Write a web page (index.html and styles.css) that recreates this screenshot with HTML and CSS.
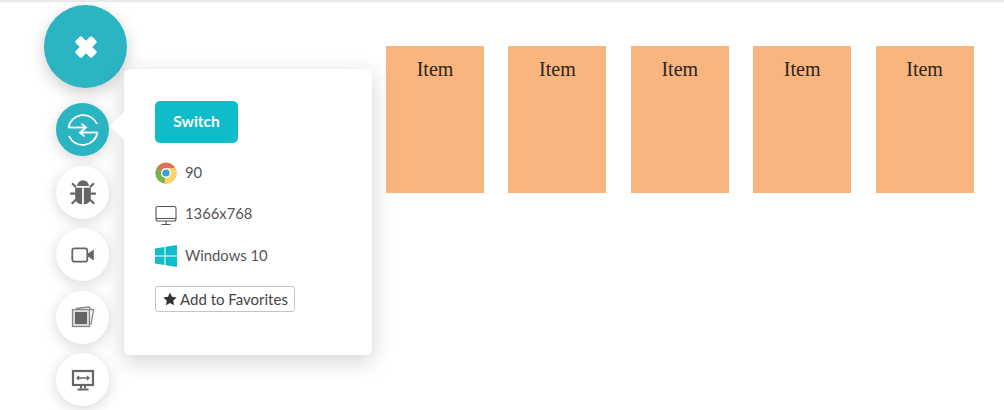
FILE: index.html
```html
<!DOCTYPE html>
<html lang="en">
<head>
<meta charset="utf-8">
<title>Items</title>
<link rel="stylesheet" href="styles.css">
</head>
<body>
<main class="items">
  <div class="item">Item</div>
  <div class="item">Item</div>
  <div class="item">Item</div>
  <div class="item">Item</div>
  <div class="item">Item</div>
</main>

<nav class="dock">
  <button class="fab" aria-label="Close">
    <svg width="28" height="28" viewBox="0 0 24 24"><path d="M3.200 6.600 6.600 3.200a1.400 1.400 0 0 1 2 0L12 6.600l3.400-3.400a1.400 1.400 0 0 1 2 0l3.400 3.400a1.400 1.400 0 0 1 0 2L17.400 12l3.400 3.400a1.400 1.400 0 0 1 0 2l-3.400 3.400a1.400 1.400 0 0 1-2 0L12 17.400l-3.400 3.400a1.400 1.400 0 0 1-2 0l-3.400-3.400a1.400 1.400 0 0 1 0-2L6.600 12 3.200 8.600a1.400 1.400 0 0 1 0-2z" fill="#fff"/></svg>
  </button>
  <div class="tools">
    <button class="tool tool-active" aria-label="Switch">
      <svg width="32" height="32" viewBox="0 0 32 32" fill="none" stroke="#fff" stroke-width="1.800"><path d="M1.500 13.500a15 15 0 0 1 28.500-3.500"/><path d="M1.500 13.500H19"/><path d="M14.500 9.800l4.500 3.700-4.500 3.300"/><path d="M30.500 18.500a15 15 0 0 1-28.500 3.500"/><path d="M30.500 18.500H13"/><path d="M17.500 15.200L13 18.500l4.500 3.700"/></svg>
    </button>
    <button class="tool" aria-label="Bug">
      <svg width="30" height="30" viewBox="0 0 28 28" fill="#666"><path d="M8.500 8.500a5.500 5.500 0 0 1 11 0z"/><path d="M6.700 10h6.500v15.500c-3.800-.3-6.500-2.500-6.500-6z"/><path d="M14.800 10h6.500v9.500c0 3.500-2.700 5.700-6.500 6z"/><path d="M7.500 9.500 3.800 5.800M20.500 9.500l3.700-3.700M7 15.500H2M21 15.500h5M7.500 21l-4 4M20.500 21l4 4" stroke="#666" stroke-width="2" fill="none"/></svg>
    </button>
    <button class="tool" aria-label="Video">
      <svg width="24" height="24" viewBox="0 0 24 24"><rect x="1.300" y="5.300" width="15" height="13.400" rx="2.200" fill="none" stroke="#666" stroke-width="1.800"/><path d="M17 10.500 22.800 6.500v11L17 13.500z" fill="#666"/></svg>
    </button>
    <button class="tool" aria-label="Screenshots">
      <svg width="24" height="24" viewBox="0 0 24 24" fill="none" stroke="#888" stroke-width="1.300"><path d="M5 3.500 18 2l1.500 1.500"/><path d="M18.500 4l4 1-2.500 14-1.500-.4"/><rect x="1.500" y="4.500" width="17" height="17" fill="#ddd"/><rect x="4" y="7" width="12" height="12" fill="#666" stroke="none"/></svg>
    </button>
    <button class="tool" aria-label="Resolution">
      <svg width="24" height="24" viewBox="0 0 24 24" fill="none" stroke="#666"><rect x="2" y="3" width="20" height="14" stroke-width="2.200"/><path d="M6 10h12M8 8l-2 2 2 2M16 8l2 2-2 2" stroke-width="1.300"/><path d="M10 17.500v3M14 17.500v3" stroke-width="2"/><path d="M6.500 21.500h11" stroke-width="2"/></svg>
    </button>
  </div>
</nav>

<section class="popover">
  <button class="switch">Switch</button>
  <ul class="specs">
    <li class="spec">
      <svg class="spec-icon" width="22" height="22" viewBox="0 0 22 22"><circle cx="11" cy="11" r="10.500" fill="#e0705c"/><path d="M11 11 1.900 5.800A10.500 10.500 0 0 0 9.500 21.400z" fill="#7cb34f"/><path d="M11 6h9.200A10.500 10.500 0 0 1 9.500 21.400L11 11z" fill="#fbd568"/><circle cx="11" cy="11" r="5" fill="#fff"/><circle cx="11" cy="11" r="3.600" fill="#3d9bd8"/></svg>
      <span class="spec-label">90</span>
    </li>
    <li class="spec">
      <svg class="spec-icon" width="22" height="22" viewBox="0 0 22 22" fill="none" stroke="#555" stroke-width="1.100"><rect x="1" y="2.500" width="20" height="14.500" rx="2"/><path d="M1 14.500h20M11 17v3M6.500 20.500h9"/></svg>
      <span class="spec-label">1366x768</span>
    </li>
    <li class="spec">
      <svg class="spec-icon" width="22" height="22" viewBox="0 0 22 22" fill="#10bcc9"><path d="M0 3.500 9.500 2v8.500H0zM10.500 1.800 22 0v10.500H10.500zM0 11.500h9.500V20L0 18.500zM10.500 11.500H22V22l-11.500-1.800z"/></svg>
      <span class="spec-label">Windows 10</span>
    </li>
  </ul>
  <button class="favorite"><svg class="star" width="14" height="14" viewBox="0 0 24 24"><path d="M12 1l3.400 7.300 7.900 1-5.800 5.500 1.500 7.900-7-3.900-7 3.900 1.500-7.900L.7 9.300l7.900-1z" fill="#333"/></svg>Add to Favorites</button>
</section>
```

FILE: styles.css
```css
* { box-sizing: border-box; }

html, body {
  margin: 0;
  height: 100%;
  overflow: hidden;
  background: #fff;
}

body {
  position: relative;
  border-top: 2px solid #e9e9e9;
  font-family: "Lato", sans-serif;
  color: #555;
}

button {
  font-family: inherit;
  cursor: pointer;
}

.items {
  display: flex;
  gap: 24.400px;
  padding: 44px 0 0 386px;
}

.item {
  width: 98px;
  height: 147px;
  padding-top: 13px;
  background: #f8b57e;
  color: #2b2520;
  font: 20px/20px "Liberation Serif", serif;
  text-align: center;
}

.dock {
  position: absolute;
  top: 3px;
  left: 44px;
  width: 83px;
  display: flex;
  flex-direction: column;
  align-items: center;
  gap: 15px;
}

.fab {
  width: 83px;
  height: 83px;
  padding: 0;
  border: 0;
  border-radius: 50%;
  background: #2bb5c2;
  display: flex;
  align-items: center;
  justify-content: center;
  box-shadow: 0 5px 16px rgba(0, 0, 0, .2);
}

.tools {
  display: flex;
  flex-direction: column;
  gap: 9.500px;
  margin-right: 6px;
}

.tool {
  width: 53px;
  height: 53px;
  padding: 0;
  border: 0;
  border-radius: 50%;
  background: #fff;
  display: flex;
  align-items: center;
  justify-content: center;
  box-shadow: 0 3px 14px rgba(0, 0, 0, .16);
}

.tool-active {
  background: #2bb5c2;
}

.popover {
  position: absolute;
  top: 67px;
  left: 124px;
  width: 248px;
  height: 286px;
  padding: 32px 31px;
  background: #fff;
  border-radius: 6px;
  box-shadow: 0 6px 22px rgba(0, 0, 0, .18);
}

.popover::before {
  content: "";
  position: absolute;
  top: 47px;
  left: -10px;
  width: 20px;
  height: 20px;
  background: #fff;
  transform: rotate(45deg);
}

.switch {
  position: relative;
  display: block;
  width: 83px;
  height: 42px;
  padding: 0 0 3px;
  border: 0;
  border-radius: 5px;
  background: #10bcc9;
  color: #fff;
  font-size: 15.500px;
  font-weight: 700;
}

.specs {
  list-style: none;
  margin: 19px 0 0;
  padding: 0;
  display: flex;
  flex-direction: column;
  gap: 19.500px;
}

.spec {
  display: flex;
  align-items: center;
  gap: 8px;
  height: 22px;
  font-size: 14.800px;
  line-height: 22px;
  color: #555;
}

.spec-label {
  margin-bottom: 3px;
}

.spec-icon {
  flex: none;
}

.favorite {
  display: flex;
  align-items: center;
  gap: 3px;
  width: 140px;
  height: 26px;
  margin-top: 19px;
  padding: 0 0 0 7px;
  background: #fff;
  border: 1px solid #c4c4c4;
  border-radius: 3px;
  color: #444;
  font-size: 15px;
  white-space: nowrap;
}

.star {
  flex: none;
}
```
